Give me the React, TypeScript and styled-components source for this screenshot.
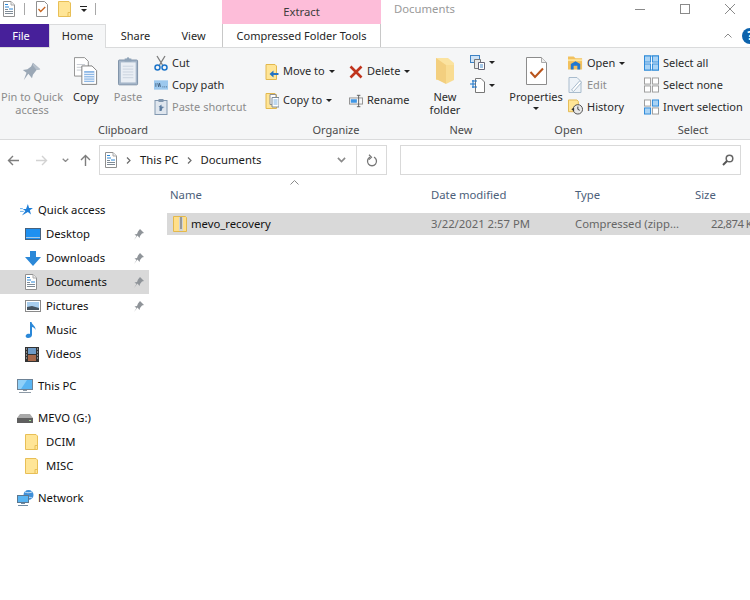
import React from 'react'
import styled, { createGlobalStyle } from 'styled-components'

const GlobalStyle = createGlobalStyle`
  html, body {
    margin: 0;
    padding: 0;
    background: #fff;
  }
  body {
    font-family: 'Noto Sans', 'Open Sans', sans-serif;
    font-size: 11.3px;
    color: #1a1a1a;
  }
`

const Window = styled.div`
  width: 750px;
  height: 600px;
  overflow: hidden;
  background: #fff;
`

/* title bar */
const TitleBar = styled.div`
  display: flex;
  height: 24px;
  align-items: center;
`
const QuickTools = styled.div`
  display: flex;
  align-items: flex-start;
  width: 222px;
  height: 24px;
`
const ToolSlot = styled.div<{ $w: number }>`
  width: ${(p) => p.$w}px;
  display: flex;
  justify-content: center;
  padding-top: 1px;
`
const ToolDivider = styled.div`
  width: 1px;
  height: 12px;
  margin-top: 3px;
  background: #a8a8a8;
`
const ExtractTab = styled.div`
  width: 159px;
  height: 24px;
  background: #fdbdd9;
  color: #3c3c3c;
  display: flex;
  align-items: center;
  justify-content: center;
  padding-bottom: 1px;
  box-sizing: border-box;
`
const WindowTitle = styled.div`
  flex: 1;
  margin: -8px 0 0 13px;
  color: #9a9a9a;
`
const WinControls = styled.div`
  display: flex;
  width: 137px;
  height: 24px;
  padding: 2px 0 0 4px;
  box-sizing: border-box;
`
const WinButton = styled.div`
  width: 45px;
  height: 14px;
  flex: none;
  display: flex;
  justify-content: center;
  align-items: center;
`

/* tabs */
const TabRow = styled.div`
  display: flex;
  align-items: stretch;
  height: 24px;
  box-sizing: border-box;
  border-bottom: 1px solid #dadbdc;
  font-size: 11px;
`
const FileTab = styled.div`
  width: 49px;
  height: 23px;
  background: #47209a;
  color: #fff;
  display: flex;
  align-items: center;
  justify-content: center;
  padding: 0 7px 0 0;
  box-sizing: border-box;
`
const Tab = styled.div<{ $w: number; $active?: boolean; $rule?: boolean }>`
  width: ${(p) => p.$w}px;
  height: ${(p) => (p.$active ? 24 : 23)}px;
  box-sizing: border-box;
  display: flex;
  align-items: center;
  justify-content: center;
  padding-bottom: ${(p) => (p.$active ? 2 : 0)}px;
  color: #262626;
  background: ${(p) => (p.$active ? '#f5f6f7' : '#fff')};
  border: ${(p) => (p.$active ? '1px solid #dadbdc' : 'none')};
  border-bottom: none;
  border-left: ${(p) => (p.$rule ? '1px solid #c8c8c8' : '')};
  border-right: ${(p) => (p.$rule ? '1px solid #c8c8c8' : '')};
  position: relative;
  z-index: 1;
`
const TabFill = styled.div`
  flex: 1;
  display: flex;
  justify-content: flex-end;
  align-items: center;
  gap: 10px;
  height: 23px;
`
const HelpBadge = styled.div`
  width: 16px;
  height: 16px;
  margin-right: -8px;
  border-radius: 50%;
  background: #0b62ac;
  color: #fff;
  font-size: 12px;
  font-weight: 700;
  line-height: 16px;
  text-align: center;
`

/* ribbon */
const Ribbon = styled.div`
  display: flex;
  height: 92px;
  box-sizing: border-box;
  background: #f5f6f7;
  border-bottom: 1px solid #dadbdc;
  font-size: 11px;
`
const Group = styled.div<{ $w: number }>`
  width: ${(p) => p.$w}px;
  flex: none;
  display: flex;
  flex-direction: column;
`
const GroupBody = styled.div<{ $left?: number }>`
  height: 74px;
  display: flex;
  padding-left: ${(p) => p.$left ?? 0}px;
  white-space: nowrap;
`
const GroupLabel = styled.div`
  height: 17px;
  line-height: 15px;
  text-align: center;
  color: #4a4a4a;
`
const LargeButton = styled.div<{ $w: number; $off?: boolean }>`
  width: ${(p) => p.$w}px;
  flex: none;
  padding-top: 8px;
  display: flex;
  flex-direction: column;
  align-items: center;
  text-align: center;
  line-height: 13px;
  color: ${(p) => (p.$off ? '#8c8c8c' : '#2b2b2b')};
`
const LargeIcon = styled.div`
  height: 30px;
  margin-bottom: 4px;
  display: flex;
  align-items: center;
  justify-content: center;
`
const SmallColumn = styled.div<{ $w?: number; $row?: number; $top?: number; $left?: number }>`
  width: ${(p) => (p.$w ? `${p.$w}px` : 'auto')};
  flex: none;
  padding-top: ${(p) => p.$top ?? 4}px;
  margin-left: ${(p) => p.$left ?? 0}px;
  display: grid;
  grid-auto-rows: ${(p) => p.$row ?? 22}px;
  align-content: start;
`
const SmallButton = styled.div<{ $off?: boolean; $slot?: number }>`
  display: flex;
  align-items: center;
  gap: 4px;
  color: ${(p) => (p.$off ? '#8c8c8c' : '#2b2b2b')};
  & > svg:first-child {
    flex: none;
    width: ${(p) => p.$slot ?? 14}px;
  }
`
const ButtonText = styled.span`
  padding-bottom: 2px;
`
const Caret = styled.span`
  display: inline-block;
  width: 0;
  height: 0;
  border-left: 3px solid transparent;
  border-right: 3px solid transparent;
  border-top: 3.5px solid #222;
`
const CaretBelow = styled(Caret)`
  margin: 4px 0 0;
`
const QuickMenu = styled.div`
  margin-top: 6px;
  width: 7px;
  display: flex;
  flex-direction: column;
  align-items: center;
  gap: 2px;
  &::before {
    content: '';
    width: 7px;
    height: 1px;
    background: #222;
  }
`

/* navigation */
const NavRow = styled.div`
  display: flex;
  height: 35px;
  padding-top: 5px;
  box-sizing: border-box;
`
const NavButton = styled.div<{ $w: number }>`
  width: ${(p) => p.$w}px;
  flex: none;
  display: flex;
  justify-content: center;
  align-items: center;
`
const AddressBar = styled.div`
  width: 288px;
  height: 30px;
  flex: none;
  box-sizing: border-box;
  border: 1px solid #d9d9d9;
  display: flex;
  align-items: center;
`
const Crumbs = styled.div`
  flex: 1;
  display: flex;
  align-items: center;
  padding-left: 5px;
  color: #1a1a1a;
`
const CrumbArrow = styled.span<{ $left: number; $right: number }>`
  display: flex;
  margin: 0 ${(p) => p.$right}px 0 ${(p) => p.$left}px;
`
const AddressAction = styled.div<{ $rule?: boolean }>`
  width: 30px;
  height: 28px;
  display: flex;
  align-items: center;
  justify-content: center;
  box-sizing: border-box;
  border-left: ${(p) => (p.$rule ? '1px solid #d9d9d9' : 'none')};
`
const SearchBox = styled.div`
  width: 341px;
  height: 30px;
  flex: none;
  margin-left: 13px;
  box-sizing: border-box;
  border: 1px solid #d9d9d9;
  display: flex;
  align-items: center;
  justify-content: flex-end;
  padding-right: 6px;
`

/* body */
const Main = styled.div`
  display: flex;
`
const Sidebar = styled.div`
  width: 149px;
  flex: none;
  padding-top: 23px;
`
const NavSection = styled.div`
  margin-bottom: 8px;
`
const NavItem = styled.div<{ $child?: boolean; $selected?: boolean }>`
  height: 24px;
  display: flex;
  align-items: center;
  padding-left: ${(p) => (p.$child ? 25 : 17)}px;
  background: ${(p) => (p.$selected ? '#d9d9d9' : 'transparent')};
  color: #111;
`
const NavIcon = styled.span<{ $inset?: number }>`
  width: 21px;
  flex: none;
  display: flex;
  box-sizing: border-box;
  padding-left: ${(p) => p.$inset ?? 0}px;
`
const NavLabel = styled.span`
  flex: 1;
  margin-top: -1px;
`
const PinSlot = styled.span`
  width: 15px;
  flex: none;
  display: flex;
`

const FileArea = styled.div`
  flex: 1;
  min-width: 0;
  padding: 11px 0 0 18px;
`
const Columns = styled.div`
  display: grid;
  grid-template-columns: 264px 144px 120px 1fr;
  white-space: nowrap;
`
const HeaderRow = styled(Columns)`
  height: 18px;
  line-height: 18px;
  margin-bottom: 9px;
  color: #4c607a;
  position: relative;
`
const HeaderCell = styled.div<{ $left?: number }>`
  padding-left: ${(p) => p.$left ?? 0}px;
`
const SortMark = styled.span`
  position: absolute;
  left: 123px;
  top: -6px;
  display: flex;
`
const FileRow = styled(Columns)`
  height: 22px;
  line-height: 22px;
  background: #d9d9d9;
  color: #666;
`
const FileName = styled.div`
  display: flex;
  align-items: center;
  gap: 4px;
  padding-left: 6px;
  color: #111;
`
const SizeCell = styled.div`
  padding-left: 16px;
  letter-spacing: -0.5px;
`

/* icons */
const PageDoc = ({ w = 12, h = 16 }: { w?: number; h?: number }) => (
  <svg width={w} height={h} viewBox="0 0 12 16">
    <path d="M.5.5h7.500l3.500 3.500v11.500h-11z" fill="#fff" stroke="#8f8f8f" />
    <path d="M8 .5v3.500h3.500" fill="#eee" stroke="#a8a8a8" />
    <path d="M2 3.500h3M2 6h4M6 8h4" stroke="#2b88d8" />
    <path d="M2 8.500h3M2 10.500h8M2 12.500h8" stroke="#7f8b96" />
  </svg>
)
const CheckDoc = () => (
  <svg width="12" height="16" viewBox="0 0 12 16">
    <path d="M.5.5h8l3 3v12h-11z" fill="#fff" stroke="#8f8f8f" />
    <path d="M2.500 8l2.200 2.500 4.500-4.500" fill="none" stroke="#c8641e" strokeWidth="1.300" />
  </svg>
)
const Folder = ({ w = 13, h = 16 }: { w?: number; h?: number }) => (
  <svg width={w} height={h} viewBox="0 0 13 16">
    <path d="M.5.5h10.500l1.500 1.500v13.500h-12z" fill="#ffe596" stroke="#e8bf56" />
    <path d="M10 15.500v-4h2.500" fill="none" stroke="#e8bf56" />
  </svg>
)
const PinLarge = () => (
  <svg width="22" height="22" viewBox="0 0 24 24">
    <path d="M13 3l8 7-4 1-4 5-1 4-4-5-5 7 3-8-4-3 5-1 4-3z" fill="#9ba8b6" />
    <path d="M13 3l8 7-4 1-4-5z" fill="#b6c0cb" />
  </svg>
)
const CopyLarge = () => (
  <svg width="24" height="28" viewBox="0 0 26 30">
    <path d="M.5.500h11l4 4v16h-15z" fill="#fff" stroke="#8a8a8a" />
    <path d="M3 8h9M3 11h9M3 14h9" stroke="#c2c8cf" />
    <path d="M8.500 9.500h11l5 5v15h-16z" fill="#fff" stroke="#7a7a7a" />
    <path d="M11 15h11v12h-11z" fill="#8eb8e6" />
    <path d="M11 17.500h11M11 20h11M11 22.500h11M11 25h11" stroke="#fff" />
  </svg>
)
const PasteLarge = () => (
  <svg width="21" height="30" viewBox="0 0 22 30">
    <rect x=".5" y="3.500" width="20" height="26" rx="1" fill="#a5b6c9" stroke="#7d90a6" />
    <rect x="3" y="6" width="15.500" height="21" fill="#e9eef4" />
    <path d="M5 10h11M5 13h11M5 16h11M5 19h11M5 22h11" stroke="#c9d3de" />
    <path d="M7 5V2h2l1-1.500h1L12 2h2v3z" fill="#8fa3b8" />
  </svg>
)
const Scissors = () => (
  <svg width="14" height="16" viewBox="0 0 14 16">
    <path d="M3 1l5.500 9M11 1L5.500 10" stroke="#7d7d7d" strokeWidth="1.300" fill="none" />
    <circle cx="3.500" cy="12.500" r="2.500" fill="none" stroke="#1c74c9" strokeWidth="1.500" />
    <circle cx="10.500" cy="12.500" r="2.500" fill="none" stroke="#1c74c9" strokeWidth="1.500" />
  </svg>
)
const CopyPath = () => (
  <svg width="15" height="10" viewBox="0 0 15 10">
    <rect width="15" height="10" fill="#9cc8ee" />
    <path d="M2 3v4M4 3l1 4 1-4 1 4M9 7h1M11 7h1M13 7h1" stroke="#34506e" fill="none" strokeWidth=".8" />
  </svg>
)
const PasteShortcut = () => (
  <svg width="13" height="16" viewBox="0 0 13 16">
    <rect x=".5" y="1.500" width="12" height="14" fill="#dfe6ee" stroke="#8298b0" />
    <path d="M4 0h5v3H4z" fill="#8298b0" />
    <path d="M5 12V8h-1l3-2.500v2l3 .5-2 1-1 3z" fill="#5d7da0" />
  </svg>
)
const MoveTo = () => (
  <svg width="13" height="16" viewBox="0 0 13 16">
    <path d="M.5.5h9l1.500 1.500v13.500H.5z" fill="#ffe596" stroke="#e2b84e" />
    <path d="M13 9H8V6.500L4 10l4 3.500V11h5z" fill="#2273c4" />
  </svg>
)
const CopyTo = () => (
  <svg width="13" height="16" viewBox="0 0 13 16">
    <path d="M.5.5h9l1.500 1.500v13.500H.5z" fill="#ffe596" stroke="#e2b84e" />
    <path d="M4.500 1.500h6v10h-6z" fill="#fff" stroke="#8f8f8f" />
    <path d="M6.500 4.500h7v9.500h-7z" fill="#fff" stroke="#7c8a99" />
    <path d="M8 7h4M8 9h4M8 11h4" stroke="#7db0e0" />
  </svg>
)
const DeleteX = () => (
  <svg width="14" height="14" viewBox="0 0 14 14">
    <path d="M1.500 1.500l11 11M12.500 1.500l-11 11" stroke="#c0341d" strokeWidth="2.600" />
  </svg>
)
const Rename = () => (
  <svg width="16" height="14" viewBox="0 0 16 14">
    <rect x=".5" y="3.500" width="15" height="7" fill="#f5f6f7" stroke="#8a8a8a" />
    <rect x="2" y="5" width="7" height="4" fill="#3f97e6" />
    <path d="M11 .5v13M9 .5h4M9 13.500h4" stroke="#555" fill="none" />
  </svg>
)
const NewFolderLarge = () => (
  <svg width="20" height="28" viewBox="0 0 20 28">
    <path d="M1 1h12l6 5v17H1z" fill="#fbe3a0" />
    <path d="M1 1l10 7v19L1 22z" fill="#f3cf7f" />
    <path d="M11 8h8v15l-8 4z" fill="#f9dc92" />
  </svg>
)
const NewItem = () => (
  <svg width="15" height="15" viewBox="0 0 15 15">
    <rect x=".5" y=".5" width="9" height="7" fill="#cfe3f6" stroke="#3e82c4" />
    <path d="M4.500 4.500h6v9h-6z" fill="#e8e8e8" stroke="#777" />
    <path d="M8.500 7.500h6v7h-6z" fill="#fff" stroke="#667" />
    <path d="M10 10h3M10 12h3" stroke="#4a90d0" />
  </svg>
)
const EasyAccess = () => (
  <svg width="15" height="15" viewBox="0 0 15 15">
    <path d="M5.500.5h5.500l3.500 3.500v10.500h-9z" fill="#fff" stroke="#777" />
    <path d="M2 3h5M0 6h6M2 9h5" stroke="#1c74c9" strokeWidth="1.200" />
    <path d="M3 2v8" stroke="#1c74c9" />
  </svg>
)
const PropertiesLarge = () => (
  <svg width="21" height="28" viewBox="0 0 21 28">
    <path d="M.5.500h15l5 5v22h-20z" fill="#fff" stroke="#8c8c8c" />
    <path d="M15.500.500v5h5" fill="#eee" stroke="#aaa" />
    <path d="M4.500 15l4.500 5 8-8.500" fill="none" stroke="#b9541b" strokeWidth="2" />
  </svg>
)
const OpenFolder = () => (
  <svg width="16" height="14" viewBox="0 0 16 14">
    <path d="M0 0h6l2 2h7v12H0z" fill="#f2c15e" />
    <path d="M0 3h15v2H0z" fill="#ffe59a" />
    <path d="M3 14V8l5-3 5 3v6h-3v-4H6v4z" fill="#1f78d1" />
  </svg>
)
const EditDoc = () => (
  <svg width="14" height="16" viewBox="0 0 14 16">
    <path d="M.5.5h8l4 4v11H.5z" fill="#eef3f8" stroke="#a9bccd" />
    <path d="M3 13l8-9 2 1.500-8 9z" fill="#fff" stroke="#a9bccd" />
  </svg>
)
const HistoryIcon = () => (
  <svg width="16" height="16" viewBox="0 0 16 16">
    <path d="M.5.500h9l1.500 1.500v11H.5z" fill="#ffe596" stroke="#e2b84e" />
    <circle cx="10.500" cy="10.500" r="5" fill="#e8e8e8" stroke="#4a4a4a" />
    <path d="M10.500 7.500v3l2 1" stroke="#333" fill="none" />
    <path d="M3.500 10.500l3-2v4z" fill="#333" />
  </svg>
)
const SelectGrid = ({ mode }: { mode: 'all' | 'none' | 'invert' }) => {
  const cells = [
    [0, 0, mode === 'all'],
    [8.5, 0, mode !== 'none'],
    [0, 8.5, mode !== 'none'],
    [8.5, 8.5, mode === 'all'],
  ] as const
  return (
    <svg width="16" height="16" viewBox="0 0 16 16">
      {mode === 'all' && <rect x=".5" y=".5" width="15" height="15" fill="#fff" stroke="#2b88d8" />}
      {cells.map(([x, y, on], i) => (
        <rect
          key={i}
          x={x + 0.5}
          y={y + 0.5}
          width="6.500"
          height="6.500"
          fill={on ? '#a9d3f5' : '#fff'}
          stroke={on ? '#2b88d8' : '#9a9a9a'}
        />
      ))}
    </svg>
  )
}
const ArrowLeft = ({ color = '#7d7d7d', flip }: { color?: string; flip?: boolean }) => (
  <svg width="12" height="11" viewBox="0 0 12 11" style={flip ? { transform: 'scaleX(-1)' } : undefined}>
    <path d="M12 5.500H1.500M6 1L1.500 5.500 6 10" fill="none" stroke={color} strokeWidth="1.400" />
  </svg>
)
const ArrowUp = () => (
  <svg width="11" height="12" viewBox="0 0 11 12">
    <path d="M5.500 12V1.500M1 6l4.500-4.500L10 6" fill="none" stroke="#7d7d7d" strokeWidth="1.400" />
  </svg>
)
const Chevron = ({ color = '#8a8a8a', w = 7 }: { color?: string; w?: number }) => (
  <svg width={w} height={w * 0.6} viewBox="0 0 10 6">
    <path d="M1 1l4 4 4-4" fill="none" stroke={color} strokeWidth="1.800" />
  </svg>
)
const ChevronRight = () => (
  <svg width="5" height="7" viewBox="0 0 5 7">
    <path d="M1 .5l3 3-3 3" fill="none" stroke="#6a6a6a" strokeWidth="1.200" />
  </svg>
)
const Refresh = () => (
  <svg width="12" height="13" viewBox="0 0 12 13">
    <path d="M4 3.200a4.500 4.500 0 1 0 4 0" fill="none" stroke="#777" strokeWidth="1.300" />
    <path d="M3 .8l2.500 2.400L3 5.600" fill="none" stroke="#777" strokeWidth="1.200" />
  </svg>
)
const Magnifier = () => (
  <svg width="12" height="12" viewBox="0 0 12 12">
    <circle cx="7.500" cy="4.500" r="3.300" fill="none" stroke="#666" strokeWidth="1.500" />
    <path d="M5 7l-4 4" stroke="#555" strokeWidth="2" />
  </svg>
)
const SmallPin = () => (
  <svg width="10" height="11" viewBox="0 0 10 11">
    <path d="M6 0l4 4-2 .5-2 2.500-.5 2-2-2.500L0 11l2.500-4L.5 5.500 3 5l1-2.500z" fill="#8f9499" />
  </svg>
)
const Star = () => (
  <svg width="13" height="12" viewBox="0 0 14 13">
    <path d="M8.500 0l1.300 4.300H14l-3.400 2.600 1.300 4.600-3.400-2.700L2 12.500l3.800-5L3 5.500h3.500z" fill="#1f7fd8" />
    <path d="M0 5h3M0 8h4" stroke="#5aa7e6" />
  </svg>
)
const Desktop = () => (
  <svg width="16" height="12" viewBox="0 0 16 12">
    <rect x=".5" y=".5" width="15" height="11" fill="#1e90f0" stroke="#47627d" />
    <path d="M1 9.500h14" stroke="#a5c8e6" />
  </svg>
)
const Downloads = () => (
  <svg width="16" height="15" viewBox="0 0 16 15">
    <path d="M5 0h6v6h5l-8 9-8-9h5z" fill="#2b88d8" />
  </svg>
)
const Pictures = () => (
  <svg width="16" height="12" viewBox="0 0 16 12">
    <rect x=".5" y=".5" width="15" height="11" fill="#fff" stroke="#8a8a8a" />
    <rect x="2" y="2" width="12" height="8" fill="#a7cdee" />
    <path d="M2 7l5-1 7 2v2H2z" fill="#45525e" />
  </svg>
)
const Music = () => (
  <svg width="12" height="16" viewBox="0 0 12 16">
    <path d="M5 0h1.500c.5 3 4.500 4 4 8-.5-2-2.500-3-3.500-3v8c0 2-2 3-4 3S0 14.500 1 13c1-1.500 3-1.500 4-1z" fill="#2b88d8" />
  </svg>
)
const Videos = () => (
  <svg width="14" height="15" viewBox="0 0 14 15">
    <rect width="14" height="15" fill="#333" />
    <rect x="3" y="1" width="8" height="6" fill="#6f9cc8" />
    <rect x="3" y="8" width="8" height="6" fill="#a8694a" />
    <path d="M1 2h1M1 5h1M1 8h1M1 11h1M12 2h1M12 5h1M12 8h1M12 11h1" stroke="#ddd" />
  </svg>
)
const ThisPC = () => (
  <svg width="16" height="14" viewBox="0 0 16 14">
    <rect x=".5" y=".5" width="15" height="10" fill="#58b4f2" stroke="#6d8296" />
    <path d="M1 1h9l-6 9H1z" fill="#8fd0f8" />
    <path d="M6 11h4v1H6zM2 13h12v1H2z" fill="#8d9aa6" />
  </svg>
)
const Drive = () => (
  <svg width="16" height="9" viewBox="0 0 16 9">
    <path d="M3 0h10l3 4v5H0V4z" fill="#a9a9a9" />
    <rect y="4" width="16" height="5" fill="#5f5f5f" />
    <path d="M12 6.500h2" stroke="#9fe08f" />
  </svg>
)
const Network = () => (
  <svg width="17" height="16" viewBox="0 0 17 16">
    <circle cx="11.500" cy="5" r="5" fill="#3f8fd8" />
    <path d="M8 2c2 1 4 1 7 0M9 8c2-1 4-1 6 0" stroke="#cfe6fa" fill="none" />
    <rect x=".5" y="5.500" width="11" height="7" fill="#58b4f2" stroke="#5c7890" />
    <path d="M4 13h4v1H4zM1 15h10v1H1z" fill="#6f8aa2" />
  </svg>
)
const ZipFolder = () => (
  <svg width="14" height="16" viewBox="0 0 14 16">
    <path d="M.5.500h12l1 1v14H.5z" fill="#ffdf8a" stroke="#e2b84e" />
    <rect x="6" y="1" width="4" height="14" fill="#cfd3d6" />
    <path d="M7 2h2M7 4h2M7 6h2M7 8h2M7 10h2M7 12h2" stroke="#5d5d5d" />
  </svg>
)

const sideTop = [
  { label: 'Desktop', icon: <Desktop />, pin: true },
  { label: 'Downloads', icon: <Downloads />, pin: true },
  { label: 'Documents', icon: <PageDoc />, pin: true, selected: true },
  { label: 'Pictures', icon: <Pictures />, pin: true },
  { label: 'Music', icon: <Music /> },
  { label: 'Videos', icon: <Videos /> },
]

export default function App() {
  return (
    <Window>
      <GlobalStyle />
      <TitleBar>
        <QuickTools>
          <ToolSlot $w={18}>
            <PageDoc />
          </ToolSlot>
          <ToolSlot $w={6} />
          <ToolDivider />
          <ToolSlot $w={11} />
          <ToolSlot $w={12}>
            <CheckDoc />
          </ToolSlot>
          <ToolSlot $w={10} />
          <ToolSlot $w={13}>
            <Folder />
          </ToolSlot>
          <ToolSlot $w={9} />
          <QuickMenu>
            <Caret />
          </QuickMenu>
          <ToolSlot $w={8} />
          <ToolDivider />
        </QuickTools>
        <ExtractTab>Extract</ExtractTab>
        <WindowTitle>Documents</WindowTitle>
        <WinControls>
          <WinButton>
            <svg width="10" height="1"><rect width="10" height="1" fill="#8a8a8a" /></svg>
          </WinButton>
          <WinButton>
            <svg width="10" height="10"><rect x=".5" y=".5" width="9" height="9" fill="none" stroke="#8a8a8a" /></svg>
          </WinButton>
          <WinButton>
            <svg width="10" height="10"><path d="M0 0l10 10M10 0L0 10" stroke="#8a8a8a" /></svg>
          </WinButton>
        </WinControls>
      </TitleBar>

      <TabRow>
        <FileTab>File</FileTab>
        <Tab $w={57} $active>Home</Tab>
        <Tab $w={59}>Share</Tab>
        <Tab $w={57}>View</Tab>
        <Tab $w={159} $rule>Compressed Folder Tools</Tab>
        <TabFill>
          <svg width="8" height="5" viewBox="0 0 8 5">
            <path d="M.5 4.500L4 1l3.500 3.500" fill="none" stroke="#8a8a8a" />
          </svg>
          <HelpBadge>?</HelpBadge>
        </TabFill>
      </TabRow>

      <Ribbon>
        <Group $w={246}>
          <GroupBody $left={2}>
            <LargeButton $w={60} $off>
              <LargeIcon><PinLarge /></LargeIcon>
              Pin to Quick
              <br />
              access
            </LargeButton>
            <LargeButton $w={48}>
              <LargeIcon><CopyLarge /></LargeIcon>
              Copy
            </LargeButton>
            <LargeButton $w={36} $off>
              <LargeIcon><PasteLarge /></LargeIcon>
              Paste
            </LargeButton>
            <SmallColumn $left={8}>
              <SmallButton><Scissors /><ButtonText>Cut</ButtonText></SmallButton>
              <SmallButton><CopyPath /><ButtonText>Copy path</ButtonText></SmallButton>
              <SmallButton $off><PasteShortcut /><ButtonText>Paste shortcut</ButtonText></SmallButton>
            </SmallColumn>
          </GroupBody>
          <GroupLabel>Clipboard</GroupLabel>
        </Group>

        <Group $w={180}>
          <GroupBody $left={19}>
            <SmallColumn $w={84} $row={29} $top={9}>
              <SmallButton><MoveTo /><ButtonText>Move to</ButtonText><Caret /></SmallButton>
              <SmallButton><CopyTo /><ButtonText>Copy to</ButtonText><Caret /></SmallButton>
            </SmallColumn>
            <SmallColumn $row={29} $top={9}>
              <SmallButton><DeleteX /><ButtonText>Delete</ButtonText><Caret /></SmallButton>
              <SmallButton><Rename /><ButtonText>Rename</ButtonText></SmallButton>
            </SmallColumn>
          </GroupBody>
          <GroupLabel>Organize</GroupLabel>
        </Group>

        <Group $w={70}>
          <GroupBody>
            <LargeButton $w={38}>
              <LargeIcon><NewFolderLarge /></LargeIcon>
              New
              <br />
              folder
            </LargeButton>
            <SmallColumn $left={6} $row={23} $top={3}>
              <SmallButton $slot={15}><NewItem /><Caret /></SmallButton>
              <SmallButton $slot={15}><EasyAccess /><Caret /></SmallButton>
            </SmallColumn>
          </GroupBody>
          <GroupLabel>New</GroupLabel>
        </Group>

        <Group $w={145}>
          <GroupBody $left={10}>
            <LargeButton $w={60}>
              <LargeIcon><PropertiesLarge /></LargeIcon>
              Properties
              <CaretBelow />
            </LargeButton>
            <SmallColumn $left={2}>
              <SmallButton $slot={15}><OpenFolder /><ButtonText>Open</ButtonText><Caret /></SmallButton>
              <SmallButton $slot={15} $off><EditDoc /><ButtonText>Edit</ButtonText></SmallButton>
              <SmallButton $slot={15}><HistoryIcon /><ButtonText>History</ButtonText></SmallButton>
            </SmallColumn>
          </GroupBody>
          <GroupLabel>Open</GroupLabel>
        </Group>

        <Group $w={104}>
          <GroupBody $left={3}>
            <SmallColumn>
              <SmallButton $slot={15}><SelectGrid mode="all" /><ButtonText>Select all</ButtonText></SmallButton>
              <SmallButton $slot={15}><SelectGrid mode="none" /><ButtonText>Select none</ButtonText></SmallButton>
              <SmallButton $slot={15}><SelectGrid mode="invert" /><ButtonText>Invert selection</ButtonText></SmallButton>
            </SmallColumn>
          </GroupBody>
          <GroupLabel>Select</GroupLabel>
        </Group>
      </Ribbon>

      <NavRow>
        <NavButton $w={25}><ArrowLeft /></NavButton>
        <NavButton $w={34}><ArrowLeft color="#d2d2d2" flip /></NavButton>
        <NavButton $w={12}><Chevron /></NavButton>
        <NavButton $w={28}><ArrowUp /></NavButton>
        <AddressBar>
          <Crumbs>
            <PageDoc />
            <CrumbArrow $left={9} $right={9}><ChevronRight /></CrumbArrow>
            <ButtonText>This PC</ButtonText>
            <CrumbArrow $left={8} $right={9}><ChevronRight /></CrumbArrow>
            <ButtonText>Documents</ButtonText>
          </Crumbs>
          <AddressAction><Chevron w={9} /></AddressAction>
          <AddressAction $rule><Refresh /></AddressAction>
        </AddressBar>
        <SearchBox><Magnifier /></SearchBox>
      </NavRow>

      <Main>
        <Sidebar>
          <NavSection>
            <NavItem>
              <NavIcon $inset={3}><Star /></NavIcon>
              <NavLabel>Quick access</NavLabel>
            </NavItem>
            {sideTop.map((item) => (
              <NavItem $child $selected={item.selected} key={item.label}>
                <NavIcon>{item.icon}</NavIcon>
                <NavLabel>{item.label}</NavLabel>
                <PinSlot>{item.pin && <SmallPin />}</PinSlot>
              </NavItem>
            ))}
          </NavSection>
          <NavSection>
            <NavItem>
              <NavIcon><ThisPC /></NavIcon>
              <NavLabel>This PC</NavLabel>
            </NavItem>
          </NavSection>
          <NavSection>
            <NavItem>
              <NavIcon><Drive /></NavIcon>
              <NavLabel>MEVO (G:)</NavLabel>
            </NavItem>
            <NavItem $child>
              <NavIcon><Folder /></NavIcon>
              <NavLabel>DCIM</NavLabel>
            </NavItem>
            <NavItem $child>
              <NavIcon><Folder /></NavIcon>
              <NavLabel>MISC</NavLabel>
            </NavItem>
          </NavSection>
          <NavSection>
            <NavItem>
              <NavIcon><Network /></NavIcon>
              <NavLabel>Network</NavLabel>
            </NavItem>
          </NavSection>
        </Sidebar>

        <FileArea>
          <HeaderRow>
            <HeaderCell $left={3}>Name</HeaderCell>
            <HeaderCell>Date modified</HeaderCell>
            <HeaderCell>Type</HeaderCell>
            <HeaderCell>Size</HeaderCell>
            <SortMark>
              <svg width="9" height="5" viewBox="0 0 9 5">
                <path d="M.5 4.500l4-4 4 4" fill="none" stroke="#8a8a8a" />
              </svg>
            </SortMark>
          </HeaderRow>
          <FileRow>
            <FileName><ZipFolder />mevo_recovery</FileName>
            <div>3/22/2021 2:57 PM</div>
            <div>Compressed (zipp...</div>
            <SizeCell>22,874 KB</SizeCell>
          </FileRow>
        </FileArea>
      </Main>
    </Window>
  )
}
